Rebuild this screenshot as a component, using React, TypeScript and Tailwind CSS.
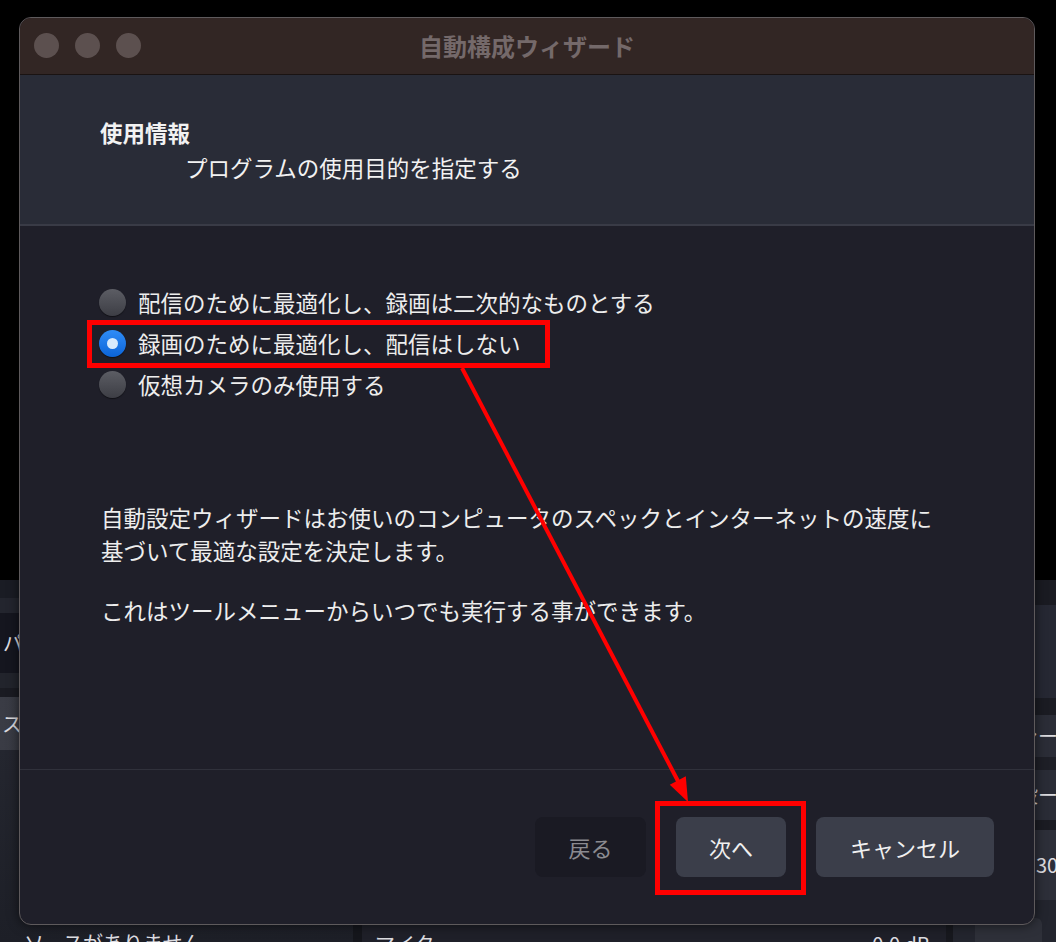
const options = [
  { label: "配信のために最適化し、録画は二次的なものとする", checked: false },
  { label: "録画のために最適化し、配信はしない", checked: true },
  { label: "仮想カメラのみ使用する", checked: false },
];

function Radio({ checked }: { checked: boolean }) {
  if (checked) {
    return (
      <span className="flex h-[27px] w-[27px] shrink-0 items-center justify-center rounded-full bg-gradient-to-b from-[#2f8cf7] to-[#0a64d8] shadow-[0_1px_1px_rgba(0,0,0,0.5)]">
        <span className="h-[11px] w-[11px] rounded-full bg-[#d9eafc]" />
      </span>
    );
  }
  return (
    <span className="h-[27px] w-[27px] shrink-0 rounded-full bg-gradient-to-b from-[#5c5d64] to-[#3d3e45] shadow-[0_1px_1px_rgba(0,0,0,0.5)]" />
  );
}

function BackgroundApp() {
  return (
    <div className="flex h-[362px] whitespace-nowrap text-[20px] text-[#dcdce0]">
      {/* sources panel */}
      <div className="flex w-[353px] flex-col">
        <div className="h-[18px] shrink-0 bg-[#1a1c24]" />
        <div className="h-[15px] shrink-0 bg-[#23252e]" />
        <div className="flex h-[60px] shrink-0 items-center bg-[#15161f] pl-[3px]">パネル</div>
        <div className="h-[15px] shrink-0 bg-[#22242c]" />
        <div className="h-[9px] shrink-0 bg-[#1a1b22]" />
        <div className="flex h-[53px] shrink-0 items-center bg-gradient-to-r from-[#3a3c45] to-[#2a2c35] pl-[2px]">
          スタジオ
        </div>
        <div className="min-h-0 flex-1 overflow-hidden bg-gradient-to-b from-[#24262f] to-[#1d1f27] pl-[24px] pt-[179px] leading-[28px]">
          ソースがありません
        </div>
      </div>
      <div className="w-[9px] bg-[#15161c]" />
      {/* audio mixer */}
      <div className="flex flex-1 justify-between overflow-hidden bg-[#1f2029] pl-[13px] pr-[16px] pt-[350px] leading-[28px]">
        <span>マイク</span>
        <span>0.0 dB</span>
      </div>
      <div className="w-[7px] bg-[#17181e]" />
      {/* controls */}
      <div className="flex w-[103px] flex-col overflow-hidden">
        <div className="h-[25px] shrink-0 bg-[#1a1b22]" />
        <div className="h-[93px] shrink-0 bg-[#262833]" />
        <div className="h-[17px] shrink-0 bg-[#1b1c23]" />
        <div className="flex h-[42px] shrink-0 items-center bg-[#2b2d37] pl-[65px]">シーン</div>
        <div className="h-[13px] shrink-0 bg-[#1e1f27]" />
        <div className="flex h-[50px] shrink-0 items-center bg-[#2a2c36] pl-[65px]">設ー</div>
        <div className="h-[10px] shrink-0 bg-[#1b1c23]" />
        <div className="flex h-[70px] shrink-0 items-center bg-[#2d2f39] pl-[83px]">30</div>
        <div className="flex min-h-0 flex-1 items-end bg-[#23252e] pl-[22px]">
          <div className="flex h-[24px] w-[67px] justify-center rounded-t-[6px] bg-[#2e3039] pt-[4px]">
            <span className="h-[3px] w-[26px] bg-[#d0d0d4]" />
          </div>
        </div>
      </div>
    </div>
  );
}

export default function App() {
  return (
    <div className="relative h-[942px] w-[1056px] overflow-hidden bg-black font-['Noto_Sans_CJK_JP','Noto_Sans',sans-serif]">
      <div className="h-[580px] bg-black" />
      <BackgroundApp />

      {/* wizard window */}
      <div className="absolute left-[19px] top-[17px] flex h-[908px] w-[1016px] flex-col overflow-hidden rounded-[12px] border border-[#5e5a5c] bg-[#1f1f29] shadow-[0_0_12px_rgba(0,0,0,0.6)]">
        <div className="relative flex h-[57px] shrink-0 items-center justify-center border-b border-[#1a1312] bg-[#322624]">
          <div className="absolute left-[14px] top-[15px] flex gap-[16px]">
            <span className="h-[25px] w-[25px] rounded-full bg-[#5c504f]" />
            <span className="h-[25px] w-[25px] rounded-full bg-[#5c504f]" />
            <span className="h-[25px] w-[25px] rounded-full bg-[#5c504f]" />
          </div>
          <span className="text-[24px] font-bold text-[#74696a]">自動構成ウィザード</span>
        </div>

        <div className="h-[151px] shrink-0 border-b-2 border-[#393b46] bg-[#292c37] pl-[80px] pt-[41px] text-[22.5px] leading-[32px] text-[#f2f2f2]">
          <div className="font-bold">使用情報</div>
          <div className="ml-[85px] mt-[3px]">プログラムの使用目的を指定する</div>
        </div>

        <div className="flex-1 pl-[79px] pt-[56px] text-[22.5px] text-[#ededed]">
          {options.map((o) => (
            <div key={o.label} className="flex h-[41px] items-center gap-[12px]">
              <Radio checked={o.checked} />
              <span>{o.label}</span>
            </div>
          ))}
          <div className="ml-[2px] mt-[96px] w-[845px] leading-[33px]">
            <p>自動設定ウィザードはお使いのコンピュータのスペックとインターネットの速度に基づいて最適な設定を決定します。</p>
            <p className="mt-[27px]">これはツールメニューからいつでも実行する事ができます。</p>
          </div>
        </div>

        <div className="flex h-[155px] shrink-0 items-center justify-end gap-[30px] border-t border-[#30313b] pr-[40px] text-[22px]">
          <button className="h-[60px] w-[111px] rounded-[8px] bg-[#1a1a23] text-[#8b8b91]">戻る</button>
          <button className="h-[60px] w-[110px] rounded-[8px] bg-[#3b3e4a] text-[#f0f0f0]">次へ</button>
          <button className="h-[60px] w-[178px] rounded-[8px] bg-[#3b3e4a] text-[#f0f0f0]">キャンセル</button>
        </div>
      </div>

      {/* red annotations */}
      <div className="absolute left-[87px] top-[320px] h-[48px] w-[463px] border-[5px] border-[#ff0000]" />
      <div className="absolute left-[655px] top-[801px] h-[94px] w-[151px] border-[5px] border-[#ff0000]" />
      <svg className="pointer-events-none absolute left-0 top-0" width="1056" height="942">
        <line x1="462" y1="368" x2="679" y2="783" stroke="#ff0000" strokeWidth="4" />
        <polygon points="688,802 669.8,784.7 685.8,776.3" fill="#ff0000" />
      </svg>
    </div>
  );
}
